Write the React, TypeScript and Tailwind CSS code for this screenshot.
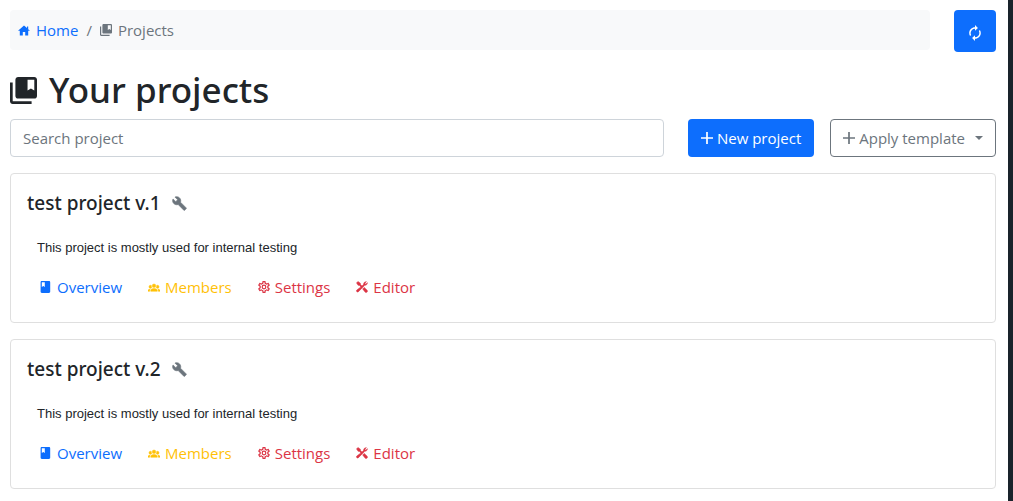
import React from "react";

type IconProps = { className: string; box: string; d: string };

function Icon({ className, box, d }: IconProps) {
  return (
    <svg className={`shrink-0 ${className}`} viewBox={box} fill="currentColor" stroke="currentColor" strokeWidth="0" aria-hidden="true">
      <path d={d} />
    </svg>
  );
}

const HOME = "M10 20v-6h4v6h5v-8h3L19 9.3V5h-2v2.5L12 3 2 12h3v8z";
const COLLECTION =
  "M4 6H2v14c0 1.1.9 2 2 2h14v-2H4V6zM20 2H8c-1.1 0-2 .9-2 2v12c0 1.1.9 2 2 2h12c1.1 0 2-.9 2-2V4c0-1.1-.9-2-2-2zm0 10l-2.5-1.5L15 12V4h5v8z";
const RENEW =
  "M12 6v3l4-4-4-4v3c-4.42 0-8 3.58-8 8 0 1.57.46 3.03 1.24 4.26L6.7 14.8c-.45-.83-.7-1.79-.7-2.8 0-3.31 2.69-6 6-6zm6.76 1.74L17.3 9.2c.44.84.7 1.79.7 2.8 0 3.31-2.69 6-6 6v-3l-4 4 4 4v-3c4.42 0 8-3.58 8-8 0-1.57-.46-3.03-1.24-4.26z";
const PLUS = "M19 13h-6v6h-2v-6H5v-2h6V5h2v6h6v2z";
const WRENCH =
  "M22.7 19l-9.1-9.1c.9-2.3.4-5-1.5-6.9-2-2-5-2.4-7.4-1.3L9 6 6 9 1.6 4.7C.4 7.1.9 10.1 2.9 12.1c1.9 1.9 4.6 2.4 6.9 1.5l9.1 9.1c.4.4 1 .4 1.4 0l2.3-2.3c.5-.4.5-1.1.1-1.4z";
const BOOK =
  "M18 2H6c-1.1 0-2 .9-2 2v16c0 1.1.9 2 2 2h12c1.1 0 2-.9 2-2V4c0-1.1-.9-2-2-2zM6 4h5v8l-2.5-1.5L6 12V4z";
const GROUP =
  "M12,5.5A3.5,3.5 0 0,1 15.5,9A3.5,3.5 0 0,1 12,12.5A3.5,3.5 0 0,1 8.5,9A3.5,3.5 0 0,1 12,5.5M5,8C5.56,8 6.08,8.15 6.53,8.42C6.38,9.85 6.8,11.27 7.66,12.38C7.16,13.34 6.16,14 5,14A3,3 0 0,1 2,11A3,3 0 0,1 5,8M19,8A3,3 0 0,1 22,11A3,3 0 0,1 19,14C17.84,14 16.84,13.34 16.34,12.38C17.2,11.27 17.62,9.85 17.47,8.42C17.92,8.15 18.44,8 19,8M5.5,18.25C5.5,16.18 8.41,14.5 12,14.5C15.59,14.5 18.5,16.18 18.5,18.25V20H5.5V18.25M0,20V18.5C0,17.11 1.89,15.94 4.45,15.6C3.86,16.28 3.5,17.22 3.5,18.25V20H0M24,20H20.5V18.25C20.5,17.22 20.14,16.28 19.55,15.6C22.11,15.94 24,17.11 24,18.5V20Z";
const COG =
  "M12,8A4,4 0 0,1 16,12A4,4 0 0,1 12,16A4,4 0 0,1 8,12A4,4 0 0,1 12,8M12,10A2,2 0 0,0 10,12A2,2 0 0,0 12,14A2,2 0 0,0 14,12A2,2 0 0,0 12,10M10,22C9.75,22 9.54,21.82 9.5,21.58L9.13,18.93C8.5,18.68 7.96,18.34 7.44,17.94L4.95,18.95C4.73,19.03 4.46,18.95 4.34,18.73L2.34,15.27C2.21,15.05 2.27,14.78 2.46,14.63L4.57,12.97L4.5,12L4.57,11L2.46,9.37C2.27,9.22 2.21,8.95 2.34,8.73L4.34,5.27C4.46,5.05 4.73,4.96 4.95,5.05L7.44,6.05C7.96,5.66 8.5,5.32 9.13,5.07L9.5,2.42C9.54,2.18 9.75,2 10,2H14C14.25,2 14.46,2.18 14.5,2.42L14.87,5.07C15.5,5.32 16.04,5.66 16.56,6.05L19.05,5.05C19.27,4.96 19.54,5.05 19.66,5.27L21.66,8.73C21.79,8.95 21.73,9.22 21.54,9.37L19.43,11L19.5,12L19.43,13L21.54,14.63C21.73,14.78 21.79,15.05 21.66,15.27L19.66,18.73C19.54,18.95 19.27,19.04 19.05,18.95L16.56,17.95C16.04,18.34 15.5,18.68 14.87,18.93L14.5,21.58C14.46,21.82 14.25,22 14,22H10M11.25,4L10.88,6.61C9.68,6.86 8.62,7.5 7.85,8.39L5.44,7.35L4.69,8.65L6.8,10.2C6.4,11.37 6.4,12.64 6.8,13.8L4.68,15.36L5.43,16.66L7.86,15.62C8.63,16.5 9.68,17.14 10.87,17.38L11.24,20H12.76L13.13,17.39C14.32,17.14 15.37,16.5 16.14,15.62L18.57,16.66L19.32,15.36L17.2,13.81C17.6,12.64 17.6,11.37 17.2,10.2L19.31,8.65L18.56,7.35L16.15,8.39C15.38,7.5 14.32,6.86 13.12,6.62L12.75,4H11.25Z";
const TOOLS =
  "M2 4.5L4.5 2L9 5V7L12 10L15 7A4.5 4.5 0 0 1 20 2.2L17.2 5L19 6.8L21.8 4A4.5 4.5 0 0 1 17 9L5.5 20.5A2.1 2.1 0 0 1 2.5 17.5L10 11.8L7 9H5zM13.2 15.5L16 12.7L21.5 18A2.5 2.5 0 0 1 18 21.5z";

const links = [
  { label: "Overview", color: "text-[#0d6efd]", size: "w-3 h-3", box: "3 2 20 20", d: BOOK },
  { label: "Members", color: "text-[#ffc107]", size: "w-3 h-[9px] stroke-1", box: "0 4 24 17", d: GROUP },
  { label: "Settings", color: "text-[#dc3545]", size: "w-3 h-3", box: "2 2 20 20", d: COG },
  { label: "Editor", color: "text-[#dc3545]", size: "w-3 h-3 stroke-1", box: "1 1 22 22", d: TOOLS },
];

function ProjectCard({ name }: { name: string }) {
  return (
    <article className="rounded border border-[#dfdfdf] px-4 pt-[17px] pb-[23px]">
      <h2 className="flex items-center gap-[11px] font-['Noto_Sans',sans-serif] text-[19px] leading-6 font-medium">
        {name}
        <Icon className="size-[15px] stroke-1 text-[#6c757d]" box="0 0 24 24" d={WRENCH} />
      </h2>
      <p className="mt-[23px] px-[10px] font-['Liberation_Sans',Arial,sans-serif] text-[13px] leading-5">
        This project is mostly used for internal testing
      </p>
      <nav className="mt-[17px] flex gap-[26px] px-[13px]" aria-label={name}>
        {links.map((l) => (
          <a key={l.label} href="#" className={`flex items-center gap-[5px] leading-6 ${l.color}`}>
            <Icon className={l.size} box={l.box} d={l.d} />
            {l.label}
          </a>
        ))}
      </nav>
    </article>
  );
}

export default function App() {
  return (
    <div className="min-h-screen border-r-[5px] border-[#19232b] bg-white py-[10px] pr-3 pl-[10px] font-['Open_Sans','Noto_Sans',sans-serif] text-[15px] text-[#212529]">
      <header className="flex items-start gap-6">
        <nav aria-label="Breadcrumb" className="flex h-10 flex-1 items-center gap-2 rounded bg-[#f8f9fa] px-2 text-[#6c757d]">
          <a href="#" className="flex items-center gap-[6px] text-[#0d6efd]">
            <Icon className="h-[11px] w-3" box="2 3 20 17" d={HOME} />
            Home
          </a>
          <span>/</span>
          <span className="flex items-center gap-[6px]">
            <Icon className="size-3" box="2 2 20 20" d={COLLECTION} />
            Projects
          </span>
        </nav>
        <button type="button" aria-label="Refresh" className="flex size-[42px] items-center justify-center rounded bg-[#0d6efd] pt-1 text-white">
          <Icon className="h-4 w-3" box="4 1 16 22" d={RENEW} />
        </button>
      </header>
      <h1 className="mt-[14px] flex items-center gap-3 font-['Noto_Sans',sans-serif] text-[35px] leading-[48px] font-medium">
        <Icon className="size-[27px]" box="2 2 20 20" d={COLLECTION} />
        Your projects
      </h1>
      <div className="mt-[5px] flex gap-4">
        <input
          type="text"
          aria-label="Search project"
          placeholder="Search project"
          className="mr-2 h-[38px] min-w-0 flex-1 rounded border border-[#ced4da] px-3 placeholder:text-[#6c757d]"
        />
        <button type="button" className="flex h-[38px] items-center gap-1 rounded bg-[#0d6efd] px-[13px] text-white">
          <Icon className="size-3" box="5 5 14 14" d={PLUS} />
          New project
        </button>
        <button type="button" className="flex h-[38px] items-center gap-1 rounded border border-[#6c757d] px-3 text-[#6c757d]">
          <Icon className="size-3" box="5 5 14 14" d={PLUS} />
          Apply template
          <Icon className="ml-[6px] h-1 w-2" box="0 0 8 4" d="M0 0h8L4 4z" />
        </button>
      </div>
      <main className="mt-4 flex flex-col gap-4">
        <ProjectCard name="test project v.1" />
        <ProjectCard name="test project v.2" />
      </main>
    </div>
  );
}
